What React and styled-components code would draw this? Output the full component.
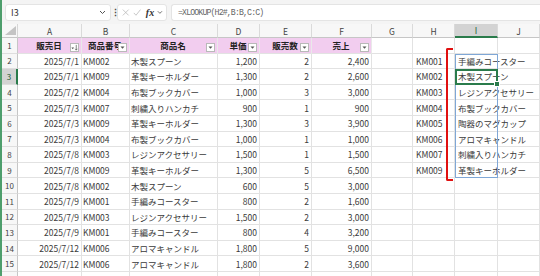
import React from "react";
import styled, { createGlobalStyle } from "styled-components";

// Estilos globales
const GlobalStyle = createGlobalStyle`
  body {
    margin: 0;
    background: #fff;
    font-family: "Noto Sans CJK JP", "Noto Sans", sans-serif;
  }
`;

const COLS = [64, 48, 88, 42, 52, 60, 41, 42, 43, 42];
const LETTERS = ["A", "B", "C", "D", "E", "F", "G", "H", "I", "J"];
const ROW_H = 15.6;
const COL_I_LEFT = 16 + COLS.slice(0, 8).reduce((a, b) => a + b, 0);

// A..F, H, I
const rows = [
  ["2025/7/1", "KM002", "木製スプーン", "1,200", "2", "2,400", "KM001", "手編みコースター"],
  ["2025/7/1", "KM009", "革製キーホルダー", "1,300", "2", "2,600", "KM002", "木製スプーン"],
  ["2025/7/2", "KM004", "布製ブックカバー", "1,000", "3", "3,000", "KM003", "レジンアクセサリー"],
  ["2025/7/3", "KM007", "刺繍入りハンカチ", "900", "1", "900", "KM004", "布製ブックカバー"],
  ["2025/7/3", "KM009", "革製キーホルダー", "1,300", "3", "3,900", "KM005", "陶器のマグカップ"],
  ["2025/7/3", "KM004", "布製ブックカバー", "1,000", "1", "1,000", "KM006", "アロマキャンドル"],
  ["2025/7/8", "KM003", "レジンアクセサリー", "1,500", "1", "1,500", "KM007", "刺繍入りハンカチ"],
  ["2025/7/8", "KM009", "革製キーホルダー", "1,300", "5", "6,500", "KM009", "革製キーホルダー"],
  ["2025/7/8", "KM002", "木製スプーン", "600", "5", "3,000", "", ""],
  ["2025/7/9", "KM001", "手編みコースター", "800", "2", "1,600", "", ""],
  ["2025/7/9", "KM003", "レジンアクセサリー", "1,500", "2", "3,000", "", ""],
  ["2025/7/9", "KM001", "手編みコースター", "800", "4", "3,200", "", ""],
  ["2025/7/12", "KM006", "アロマキャンドル", "1,800", "5", "9,000", "", ""],
  ["2025/7/12", "KM006", "アロマキャンドル", "1,800", "2", "3,600", "", ""],
];

const headers = ["販売日", "商品番号", "商品名", "単価", "販売数", "売上"];
const ALIGN = ["right", "left", "left", "right", "right", "right", "left", "left", "left", "left"];

// cell value for column index ci (G is empty, H/I from the lookup list)
const valueAt = (r, ci) => {
  if (ci < 6) return r[ci];
  if (ci === 7) return r[6];
  if (ci === 8) return r[7];
  return "";
};

// Contenedor
const Window = styled.div`
  width: 538px;
  height: 276px;
  overflow: hidden;
  border-left: 2px solid #4e9e6c;
`;

// Barra de fórmulas
const FormulaBar = styled.div`
  height: 24px;
  display: flex;
  align-items: center;
  padding-left: 3px;
  background: #f4f4f4;
  box-sizing: border-box;
`;

const Box = styled.div`
  height: 17px;
  background: #fff;
  border: 1px solid #e4e4e4;
  border-radius: 3px;
  box-sizing: border-box;
  display: flex;
  align-items: center;
`;

const NameBox = styled(Box)`
  width: 106px;
  padding: 0 4px 0 5px;
  justify-content: space-between;
  font-size: 9px;
  color: #333;
`;

const Dots = styled.div`
  width: 6px;
  text-align: center;
  font-size: 9px;
  font-weight: bold;
  color: #444;
`;

const FxBox = styled(Box)`
  width: 50px;
  padding: 0 3px 0 4px;
  gap: 3px;
`;

const Fx = styled.span`
  font-family: "Liberation Serif", serif;
  font-style: italic;
  font-weight: bold;
  font-size: 10px;
  color: #333;
  margin-left: 2px;
`;

const FormulaInput = styled(Box)`
  flex: 1;
  margin-left: 4px;
  padding-left: 6px;
  border-right: none;
  border-radius: 3px 0 0 3px;
  font-family: "Liberation Mono", monospace;
  font-size: 8.2px;
  letter-spacing: -0.85px;
  color: #666;
`;

// Hoja
const Sheet = styled.div`
  position: relative;
  display: grid;
  grid-template-columns: 16px ${COLS.map((w) => `${w}px`).join(" ")};
  grid-template-rows: 14px;
  grid-auto-rows: ${ROW_H}px;
`;

const Corner = styled.div`
  background: #f7f7f7;
  border-right: 1px solid #d6d6d6;
  border-bottom: 1px solid #c6c6c6;
  box-sizing: border-box;
  display: flex;
  align-items: flex-end;
  justify-content: flex-end;
  padding: 0 1px 2px 0;
`;

const ColHead = styled.div`
  background: ${(p) => (p.$active ? "#d3d3d3" : "#f7f7f7")};
  border-right: 1px solid #dadada;
  border-bottom: ${(p) => (p.$active ? "2px solid #2a7b4b" : "1px solid #c6c6c6")};
  box-sizing: border-box;
  display: flex;
  align-items: center;
  justify-content: center;
  font-size: 8.5px;
  color: ${(p) => (p.$active ? "#1d5a37" : "#444")};
`;

const RowHead = styled.div`
  background: ${(p) => (p.$active ? "#d3d3d3" : "#f7f7f7")};
  border-right: ${(p) => (p.$active ? "2px solid #2a7b4b" : "1px solid #c6c6c6")};
  border-bottom: 1px solid #dedede;
  box-sizing: border-box;
  display: flex;
  align-items: center;
  justify-content: center;
  font-size: 8px;
  color: ${(p) => (p.$active ? "#1d5a37" : "#444")};
`;

const Cell = styled.div`
  position: relative;
  border-right: 1px solid #e2e2e2;
  border-bottom: 1px solid #e2e2e2;
  box-sizing: border-box;
  display: flex;
  align-items: center;
  justify-content: ${(p) => (p.$align === "right" ? "flex-end" : p.$align === "center" ? "center" : "flex-start")};
  padding: 0 2px 0 ${(p) => (p.$indent ? 3 : 1)}px;
  white-space: nowrap;
  font-size: 8.5px;
  color: #3a3a3a;
`;

const HeadCell = styled(Cell)`
  background: #f2cdef;
  border-right-color: #e9e9e9;
  border-bottom-color: #e2e2e2;
  font-weight: bold;
  color: #222;
  overflow: hidden;
`;

const FilterBtn = styled.div`
  position: absolute;
  right: 2px;
  bottom: 1px;
  width: 9px;
  height: 9px;
  background: #fff;
  border: 1px solid #b9b9b9;
  box-sizing: border-box;
  display: flex;
  align-items: center;
  justify-content: center;
`;

// Superposiciones
const SpillRange = styled.div`
  position: absolute;
  left: ${COL_I_LEFT}px;
  top: ${14 + ROW_H}px;
  width: 43px;
  height: ${ROW_H * 8}px;
  border: 1px solid #7fa7d6;
  box-sizing: border-box;
  pointer-events: none;
`;

const ActiveCell = styled.div`
  position: absolute;
  left: ${COL_I_LEFT}px;
  top: ${14 + ROW_H * 2}px;
  width: 43px;
  height: ${ROW_H}px;
  border: 2px solid #2a7b4b;
  box-sizing: border-box;
  pointer-events: none;
  &::after {
    content: "";
    position: absolute;
    right: -4px;
    bottom: -4px;
    width: 4px;
    height: 4px;
    background: #2a7b4b;
    border: 1px solid #fff;
  }
`;

const Bracket = styled.div`
  position: absolute;
  left: ${COL_I_LEFT - 9}px;
  top: 24px;
  width: 7px;
  height: 133px;
  border: 2.5px solid #e01010;
  border-right: none;
  border-radius: 2px 0 0 2px;
  box-sizing: border-box;
  pointer-events: none;
`;

const Chevron = () => (
  <svg width="7" height="5" viewBox="0 0 7 5">
    <path d="M1 1 L3.5 3.5 L6 1" fill="none" stroke="#555" strokeWidth="1" />
  </svg>
);

const Cross = () => (
  <svg width="9" height="9" viewBox="0 0 9 9">
    <path d="M1 1 L8 8 M8 1 L1 8" stroke="#b5b5b5" strokeWidth="0.9" />
  </svg>
);

const Check = () => (
  <svg width="10" height="9" viewBox="0 0 10 9">
    <path d="M1 5 L3.6 7.8 L9 1" fill="none" stroke="#b5b5b5" strokeWidth="0.9" />
  </svg>
);

const DropArrow = () => (
  <svg width="5" height="3" viewBox="0 0 5 3">
    <path d="M0.5 0.5 L4.5 0.5 L2.5 2.8 Z" fill="#555" />
  </svg>
);

const SortDropArrow = () => (
  <svg width="8" height="7" viewBox="0 0 8 7">
    <path d="M0.5 3.5 L3.5 3.5 L2 5.5 Z" fill="#555" />
    <path d="M6 0.5 L6 6.5 M4.8 5 L6 6.5 L7.2 5" fill="none" stroke="#555" strokeWidth="0.8" />
  </svg>
);

const CornerTriangle = () => (
  <svg width="11" height="9" viewBox="0 0 11 9">
    <path d="M11 0 L11 9 L0 9 Z" fill="#c4c4c4" />
  </svg>
);

const App = () => {
  return (
    <>
      <GlobalStyle />
      <Window>
        <FormulaBar>
          <NameBox>
            <span>I3</span>
            <Chevron />
          </NameBox>
          <Dots>⋮</Dots>
          <FxBox>
            <Cross />
            <Check />
            <Fx>fx</Fx>
            <Chevron />
          </FxBox>
          <FormulaInput>=XLOOKUP(H2#,B:B,C:C)</FormulaInput>
        </FormulaBar>
        <Sheet>
          <Corner>
            <CornerTriangle />
          </Corner>
          {LETTERS.map((l) => (
            <ColHead key={l} $active={l === "I"}>
              {l}
            </ColHead>
          ))}

          <RowHead>1</RowHead>
          {LETTERS.map((l, i) =>
            i < headers.length ? (
              <HeadCell key={l} $align="center">
                {headers[i]}
                <FilterBtn>{i === 0 ? <SortDropArrow /> : <DropArrow />}</FilterBtn>
              </HeadCell>
            ) : (
              <Cell key={l} />
            )
          )}

          {rows.map((r, ri) => (
            <React.Fragment key={ri}>
              <RowHead $active={ri + 2 === 3}>{ri + 2}</RowHead>
              {LETTERS.map((l, ci) => (
                <Cell key={l} $align={ALIGN[ci]} $indent={ci === 7 || ci === 8}>
                  {valueAt(r, ci)}
                </Cell>
              ))}
            </React.Fragment>
          ))}

          {/* partially visible row 16 */}
          <RowHead />
          {LETTERS.map((l) => (
            <Cell key={l} />
          ))}

          <SpillRange />
          <ActiveCell />
          <Bracket />
        </Sheet>
      </Window>
    </>
  );
};

export default App;
